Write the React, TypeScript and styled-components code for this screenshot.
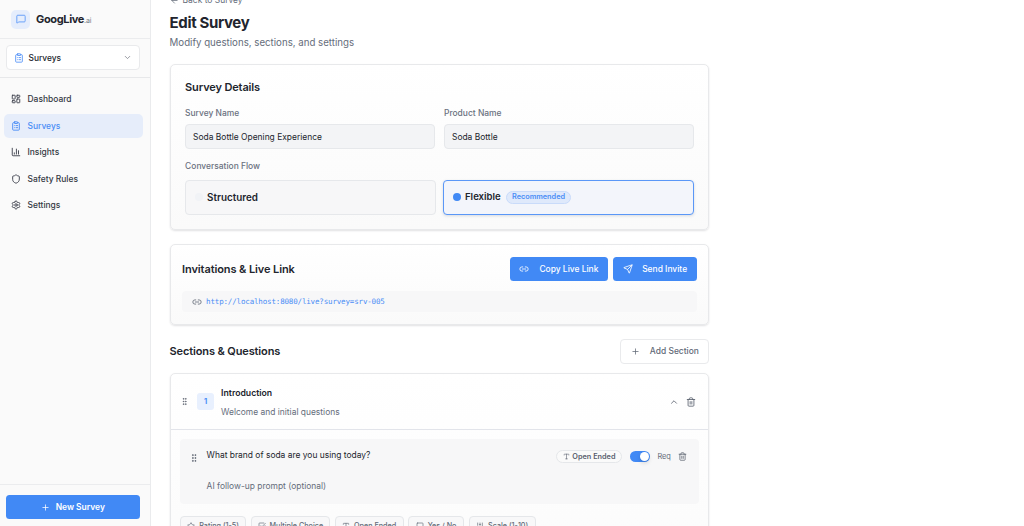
import React from "react";
import styled, { createGlobalStyle, css } from "styled-components";
import {
  ArrowLeft, ChartColumn, ChevronDown, ChevronUp, ClipboardList, GripVertical, LayoutDashboard,
  Link2, MessageSquare, Plus, Send, Settings, Shield, Square, SquareCheckBig, Star, Trash2, Type,
  SlidersVertical,
} from "lucide-react";

const Global = createGlobalStyle`
  * { box-sizing: border-box; }
  body { margin: 0; background: #fff; font-family: Inter, "Liberation Sans", sans-serif; color: #22252d; }
  svg { flex: none; display: block; }
`;

const Page = styled.div`
  display: flex;
  height: 526px;
  overflow: hidden;
`;

const Text = styled.span<{ $size?: number; $weight?: number; $color?: string; $ls?: number; $lh?: number }>`
  font-size: ${(p) => p.$size ?? 8.45}px;
  font-weight: ${(p) => p.$weight ?? 400};
  color: ${(p) => p.$color ?? "#22252d"};
  letter-spacing: ${(p) => p.$ls ?? 0}px;
  line-height: ${(p) => p.$lh ?? 12}px;
  white-space: nowrap;
`;

/* Sidebar */
const Sidebar = styled.aside`
  width: 151px;
  flex: none;
  display: flex;
  flex-direction: column;
  background: #fafafa;
  border-right: 1px solid #eaebed;
`;
const Brand = styled.div`
  height: 39px;
  display: flex;
  align-items: center;
  padding-left: 11px;
  border-bottom: 1px solid #ebecee;
`;
const BrandName = styled.div`
  display: flex;
  align-items: baseline;
  padding-top: 1px;
`;
const BrandMark = styled.div`
  width: 19px;
  height: 19px;
  border-radius: 5px;
  display: grid;
  place-items: center;
  background: #e5edfc;
  color: #5293f8;
  margin-right: 6px;
`;
const SelectArea = styled.div`
  height: 39px;
  padding: 6px 10px 0 6px;
  border-bottom: 1px solid #e7e8ea;
`;
const SelectBox = styled.div`
  height: 25px;
  display: flex;
  align-items: center;
  gap: 4.5px;
  padding: 0 7px;
  background: #fff;
  border: 1px solid #e9eaec;
  border-radius: 4px;
  color: #4a8df6;
  svg:last-child { margin-left: auto; color: #777b84; }
`;
const Nav = styled.nav`
  flex: 1;
  display: flex;
  flex-direction: column;
  gap: 2.5px;
  padding: 9px 7px 0 4px;
`;
const NavItem = styled.div<{ $active?: boolean }>`
  height: 24px;
  display: flex;
  align-items: center;
  gap: 7px;
  padding-left: 6.5px;
  border-radius: 5px;
  background: ${(p) => (p.$active ? "#e6edfa" : "transparent")};
  color: ${(p) => (p.$active ? "#4a8df6" : "#3c404b")};
`;
const SidebarFooter = styled.div`
  height: 42px;
  padding: 10px 10px 0 6px;
  border-top: 1px solid #ebecee;
`;

const Button = styled.div<{ $outline?: boolean; $gap: number; $width: number; $height?: number }>`
  width: ${(p) => p.$width}px;
  height: ${(p) => p.$height ?? 24}px;
  display: flex;
  align-items: center;
  justify-content: center;
  gap: ${(p) => p.$gap}px;
  border-radius: 3.5px;
  color: #fff;
  background: #4189f5;
  ${(p) => p.$outline && css`
    background: #fff;
    color: #626977;
    border: 1px solid #e9eaec;
    border-radius: 4px;
  `}
`;

/* Main column */
const Main = styled.main`
  width: 539.8px;
  flex: none;
  margin-left: 18.6px;
  display: flex;
  flex-direction: column;
  > * { flex: none; }
`;
const BackLink = styled.div`
  height: 12px;
  margin-top: -6px;
  display: flex;
  align-items: center;
  gap: 4px;
  color: #656d7b;
`;
const PageHead = styled.header`
  display: flex;
  flex-direction: column;
  gap: 3px;
  padding-top: 6px;
  height: 57.5px;
`;
const Card = styled.section`
  border: 1px solid #e8e9eb;
  border-radius: 5px;
  background: linear-gradient(#fff, #fafafa);
  box-shadow: 0 1px 2px rgba(20, 25, 35, 0.13);
`;
const DetailsCard = styled(Card)`
  height: 166.5px;
  padding: 14.4px 14.5px 0;
  display: flex;
  flex-direction: column;
`;
const Fields = styled.div`
  display: grid;
  grid-template-columns: 1fr 1fr;
  column-gap: 9px;
  margin-top: 12.3px;
`;
const Field = styled.div`
  display: flex;
  flex-direction: column;
  gap: 5px;
`;
const Input = styled.div`
  height: 25px;
  display: flex;
  align-items: center;
  padding: 1px 0 0 7px;
  background: #f3f4f6;
  border: 1px solid #e6e8eb;
  border-radius: 4px;
`;
const FlowLabel = styled.div`
  display: flex;
  margin: 11px 0 7.8px;
`;
const Options = styled.div`
  display: grid;
  grid-template-columns: 1fr 1fr;
  column-gap: 7px;
`;
const Option = styled.div<{ $selected?: boolean }>`
  height: 35px;
  display: flex;
  align-items: center;
  padding-left: 9px;
  border-radius: 4px;
  border: 1px solid ${(p) => (p.$selected ? "#5a97f7" : "#e6e8eb")};
  background: ${(p) => (p.$selected ? "#f3f5fb" : "#f7f7f8")};
  box-shadow: ${(p) => (p.$selected ? "0 1px 3px rgba(30, 50, 90, 0.16)" : "none")};
`;
const Dot = styled.i<{ $on?: boolean }>`
  width: 8px;
  height: 8px;
  border-radius: 50%;
  background: ${(p) => (p.$on ? "#4189f5" : "#f1f3f6")};
  margin-right: 4px;
`;
const Badge = styled.div`
  height: 13px;
  width: 65.5px;
  display: flex;
  align-items: center;
  justify-content: center;
  margin-left: 5px;
  border: 1px solid #c9dbfa;
  border-radius: 7px;
  background: #dfe9fb;
`;
const InviteCard = styled(Card)`
  height: 81px;
  margin-top: 14px;
  padding: 12px 11.5px 0;
`;
const Row = styled.div<{ $gap?: number }>`
  display: flex;
  align-items: center;
  gap: ${(p) => p.$gap ?? 0}px;
`;
const SpreadRow = styled(Row)`
  justify-content: space-between;
`;
const LinkRow = styled(Row)`
  height: 21px;
  margin-top: 10px;
  padding-left: 9.5px;
  border-radius: 4px;
  background: #f7f7f8;
  color: #646b78;
`;
const LinkUrl = styled.span`
  font: 7.5px/12px "DejaVu Sans Mono", "Liberation Mono", monospace;
  letter-spacing: -0.16px;
  color: #4a8df6;
`;
const SectionBar = styled(SpreadRow)`
  height: 25px;
  margin-top: 13.5px;
`;
const SectionCard = styled(Card)`
  height: 240px;
  margin-top: 9.5px;
`;
const SectionHead = styled(Row)`
  height: 56px;
  padding: 0 12px 0 9.5px;
  color: #59606e;
  border-bottom: 1px solid #e2e4ea;
`;
const Index = styled.div`
  width: 17px;
  height: 17px;
  margin: 0 7px 0 8px;
  border-radius: 3px;
  display: grid;
  place-items: center;
  background: #e8f0fe;
`;
const Stack = styled.div<{ $gap: number; $top?: number }>`
  flex: 1;
  display: flex;
  flex-direction: column;
  gap: ${(p) => p.$gap}px;
  padding-top: ${(p) => p.$top ?? 0}px;
`;
const Question = styled.div`
  height: 65px;
  margin: 9px 9.5px 0;
  padding: 10px 12px 0 9px;
  display: flex;
  align-items: flex-start;
  border-radius: 4px;
  background: #f7f7f8;
  color: #59606e;
`;
const Handle = styled.div`
  padding-top: 4px;
  margin-right: 7.5px;
`;
const QuestionControls = styled(Row)`
  padding-top: 1px;
  > svg { margin-left: 7px; }
`;
const TypePill = styled(Row)`
  width: 66px;
  height: 13px;
  justify-content: center;
  border: 1px solid #e5e7ea;
  border-radius: 7px;
  background: #fafafa;
`;
const Toggle = styled.div`
  width: 20px;
  height: 11px;
  margin: 0 7px 0 8px;
  padding: 1px;
  display: flex;
  justify-content: flex-end;
  border-radius: 6px;
  background: #4189f5;
`;
const Knob = styled.i`
  width: 9px;
  height: 9px;
  border-radius: 50%;
  background: #fff;
  box-shadow: 0 2px 4px rgba(0, 0, 0, 0.15);
`;
const Chips = styled.div`
  display: flex;
  gap: 4.5px;
  margin: 12px 0 0 9.5px;
`;
const Chip = styled.div<{ $width: number }>`
  width: ${(p) => p.$width}px;
  height: 19px;
  display: flex;
  align-items: center;
  justify-content: center;
  gap: 4px;
  border: 1px solid #e5e7ea;
  border-radius: 4px;
  background: #f8f8f9;
  color: #626977;
`;

const navItems = [
  { label: "Dashboard", icon: LayoutDashboard },
  { label: "Surveys", icon: ClipboardList, active: true },
  { label: "Insights", icon: ChartColumn },
  { label: "Safety Rules", icon: Shield },
  { label: "Settings", icon: Settings },
];

const chips = [
  { label: "Rating (1-5)", icon: Star, width: 66 },
  { label: "Multiple Choice", icon: SquareCheckBig, width: 79.5 },
  { label: "Open Ended", icon: Type, width: 69 },
  { label: "Yes / No", icon: Square, width: 56 },
  { label: "Scale (1-10)", icon: SlidersVertical, width: 67 },
];

export default function App() {
  return (
    <Page>
      <Global />
      <Sidebar>
        <Brand>
          <BrandMark><MessageSquare size={10} /></BrandMark>
          <BrandName>
            <Text $size={11} $weight={700} $ls={-0.35}>GoogLive</Text>
            <Text $size={7} $color="#777e8b" $ls={-0.1}>.ai</Text>
          </BrandName>
        </Brand>
        <SelectArea>
          <SelectBox>
            <ClipboardList size={10} />
            <Text $weight={500} $size={8.4}>Surveys</Text>
            <ChevronDown size={9} />
          </SelectBox>
        </SelectArea>
        <Nav>
          {navItems.map(({ label, icon: Icon, active }) => (
            <NavItem key={label} $active={active}>
              <Icon size={10} strokeWidth={2.2} />
              <Text $weight={500} $color={active ? "#4a8df6" : "#343843"}>{label}</Text>
            </NavItem>
          ))}
        </Nav>
        <SidebarFooter>
          <Button $width={134} $gap={5.5}>
            <Plus size={9} />
            <Text $weight={600} $color="#fff">New Survey</Text>
          </Button>
        </SidebarFooter>
      </Sidebar>

      <Main>
        <BackLink>
          <ArrowLeft size={9} />
          <Text $color="#656d7b">Back to Survey</Text>
        </BackLink>
        <PageHead>
          <Text $size={15} $weight={700} $ls={-0.35} $lh={21}>Edit Survey</Text>
          <Text $size={9.7} $color="#656d7b" $lh={14}>Modify questions, sections, and settings</Text>
        </PageHead>

        <DetailsCard>
          <Text $size={11} $weight={600} $ls={-0.13} $lh={16}>Survey Details</Text>
          <Fields>
            <Field>
              <Text $weight={500} $color="#6a7180">Survey Name</Text>
              <Input><Text>Soda Bottle Opening Experience</Text></Input>
            </Field>
            <Field>
              <Text $weight={500} $color="#6a7180">Product Name</Text>
              <Input><Text>Soda Bottle</Text></Input>
            </Field>
          </Fields>
          <FlowLabel><Text $weight={500} $color="#6a7180">Conversation Flow</Text></FlowLabel>
          <Options>
            <Option>
              <Dot />
              <Text $size={9.9} $weight={600}>Structured</Text>
            </Option>
            <Option $selected>
              <Dot $on />
              <Text $size={9.6} $weight={600}>Flexible</Text>
              <Badge><Text $size={7.3} $weight={600} $color="#4a8df6">Recommended</Text></Badge>
            </Option>
          </Options>
        </DetailsCard>

        <InviteCard>
          <SpreadRow>
            <Text $size={11} $weight={600} $ls={-0.1} $lh={16}>Invitations &amp; Live Link</Text>
            <Row $gap={5}>
              <Button $width={98} $height={23.5} $gap={10}>
                <Link2 size={10} />
                <Text $weight={500} $color="#fff">Copy Live Link</Text>
              </Button>
              <Button $width={84} $gap={9.5}>
                <Send size={10} />
                <Text $weight={500} $color="#fff">Send Invite</Text>
              </Button>
            </Row>
          </SpreadRow>
          <LinkRow $gap={4.5}>
            <Link2 size={10} />
            <LinkUrl>http://localhost:8080/live?survey=srv-005</LinkUrl>
          </LinkRow>
        </InviteCard>

        <SectionBar>
          <Text $size={11} $weight={600} $ls={-0.13} $lh={16}>Sections &amp; Questions</Text>
          <Button $outline $width={89} $height={25} $gap={10}>
            <Plus size={9} />
            <Text $weight={500} $color="#626977">Add Section</Text>
          </Button>
        </SectionBar>

        <SectionCard>
          <SectionHead>
            <GripVertical size={9} />
            <Index><Text $size={7.5} $weight={700} $color="#4a8df6">1</Text></Index>
            <Stack $gap={7} $top={2}>
              <Text $size={8.7} $weight={600}>Introduction</Text>
              <Text $color="#656d7b">Welcome and initial questions</Text>
            </Stack>
            <Row $gap={7}>
              <ChevronUp size={10} />
              <Trash2 size={10} />
            </Row>
          </SectionHead>
          <Question>
            <Handle><GripVertical size={10} /></Handle>
            <Stack $gap={19}>
              <Text>What brand of soda are you using today?</Text>
              <Text $color="#656d7b">AI follow-up prompt (optional)</Text>
            </Stack>
            <QuestionControls>
              <TypePill $gap={2}>
                <Type size={7} />
                <Text $size={7.3} $weight={600} $color="#59606e">Open Ended</Text>
              </TypePill>
              <Toggle><Knob /></Toggle>
              <Text $size={7.4} $color="#656d7b">Req</Text>
              <Trash2 size={9} />
            </QuestionControls>
          </Question>
          <Chips>
            {chips.map(({ label, icon: Icon, width }) => (
              <Chip key={label} $width={width}>
                <Icon size={8} />
                <Text $size={7.2} $weight={500} $color="#626977">{label}</Text>
              </Chip>
            ))}
          </Chips>
        </SectionCard>
      </Main>
    </Page>
  );
}
